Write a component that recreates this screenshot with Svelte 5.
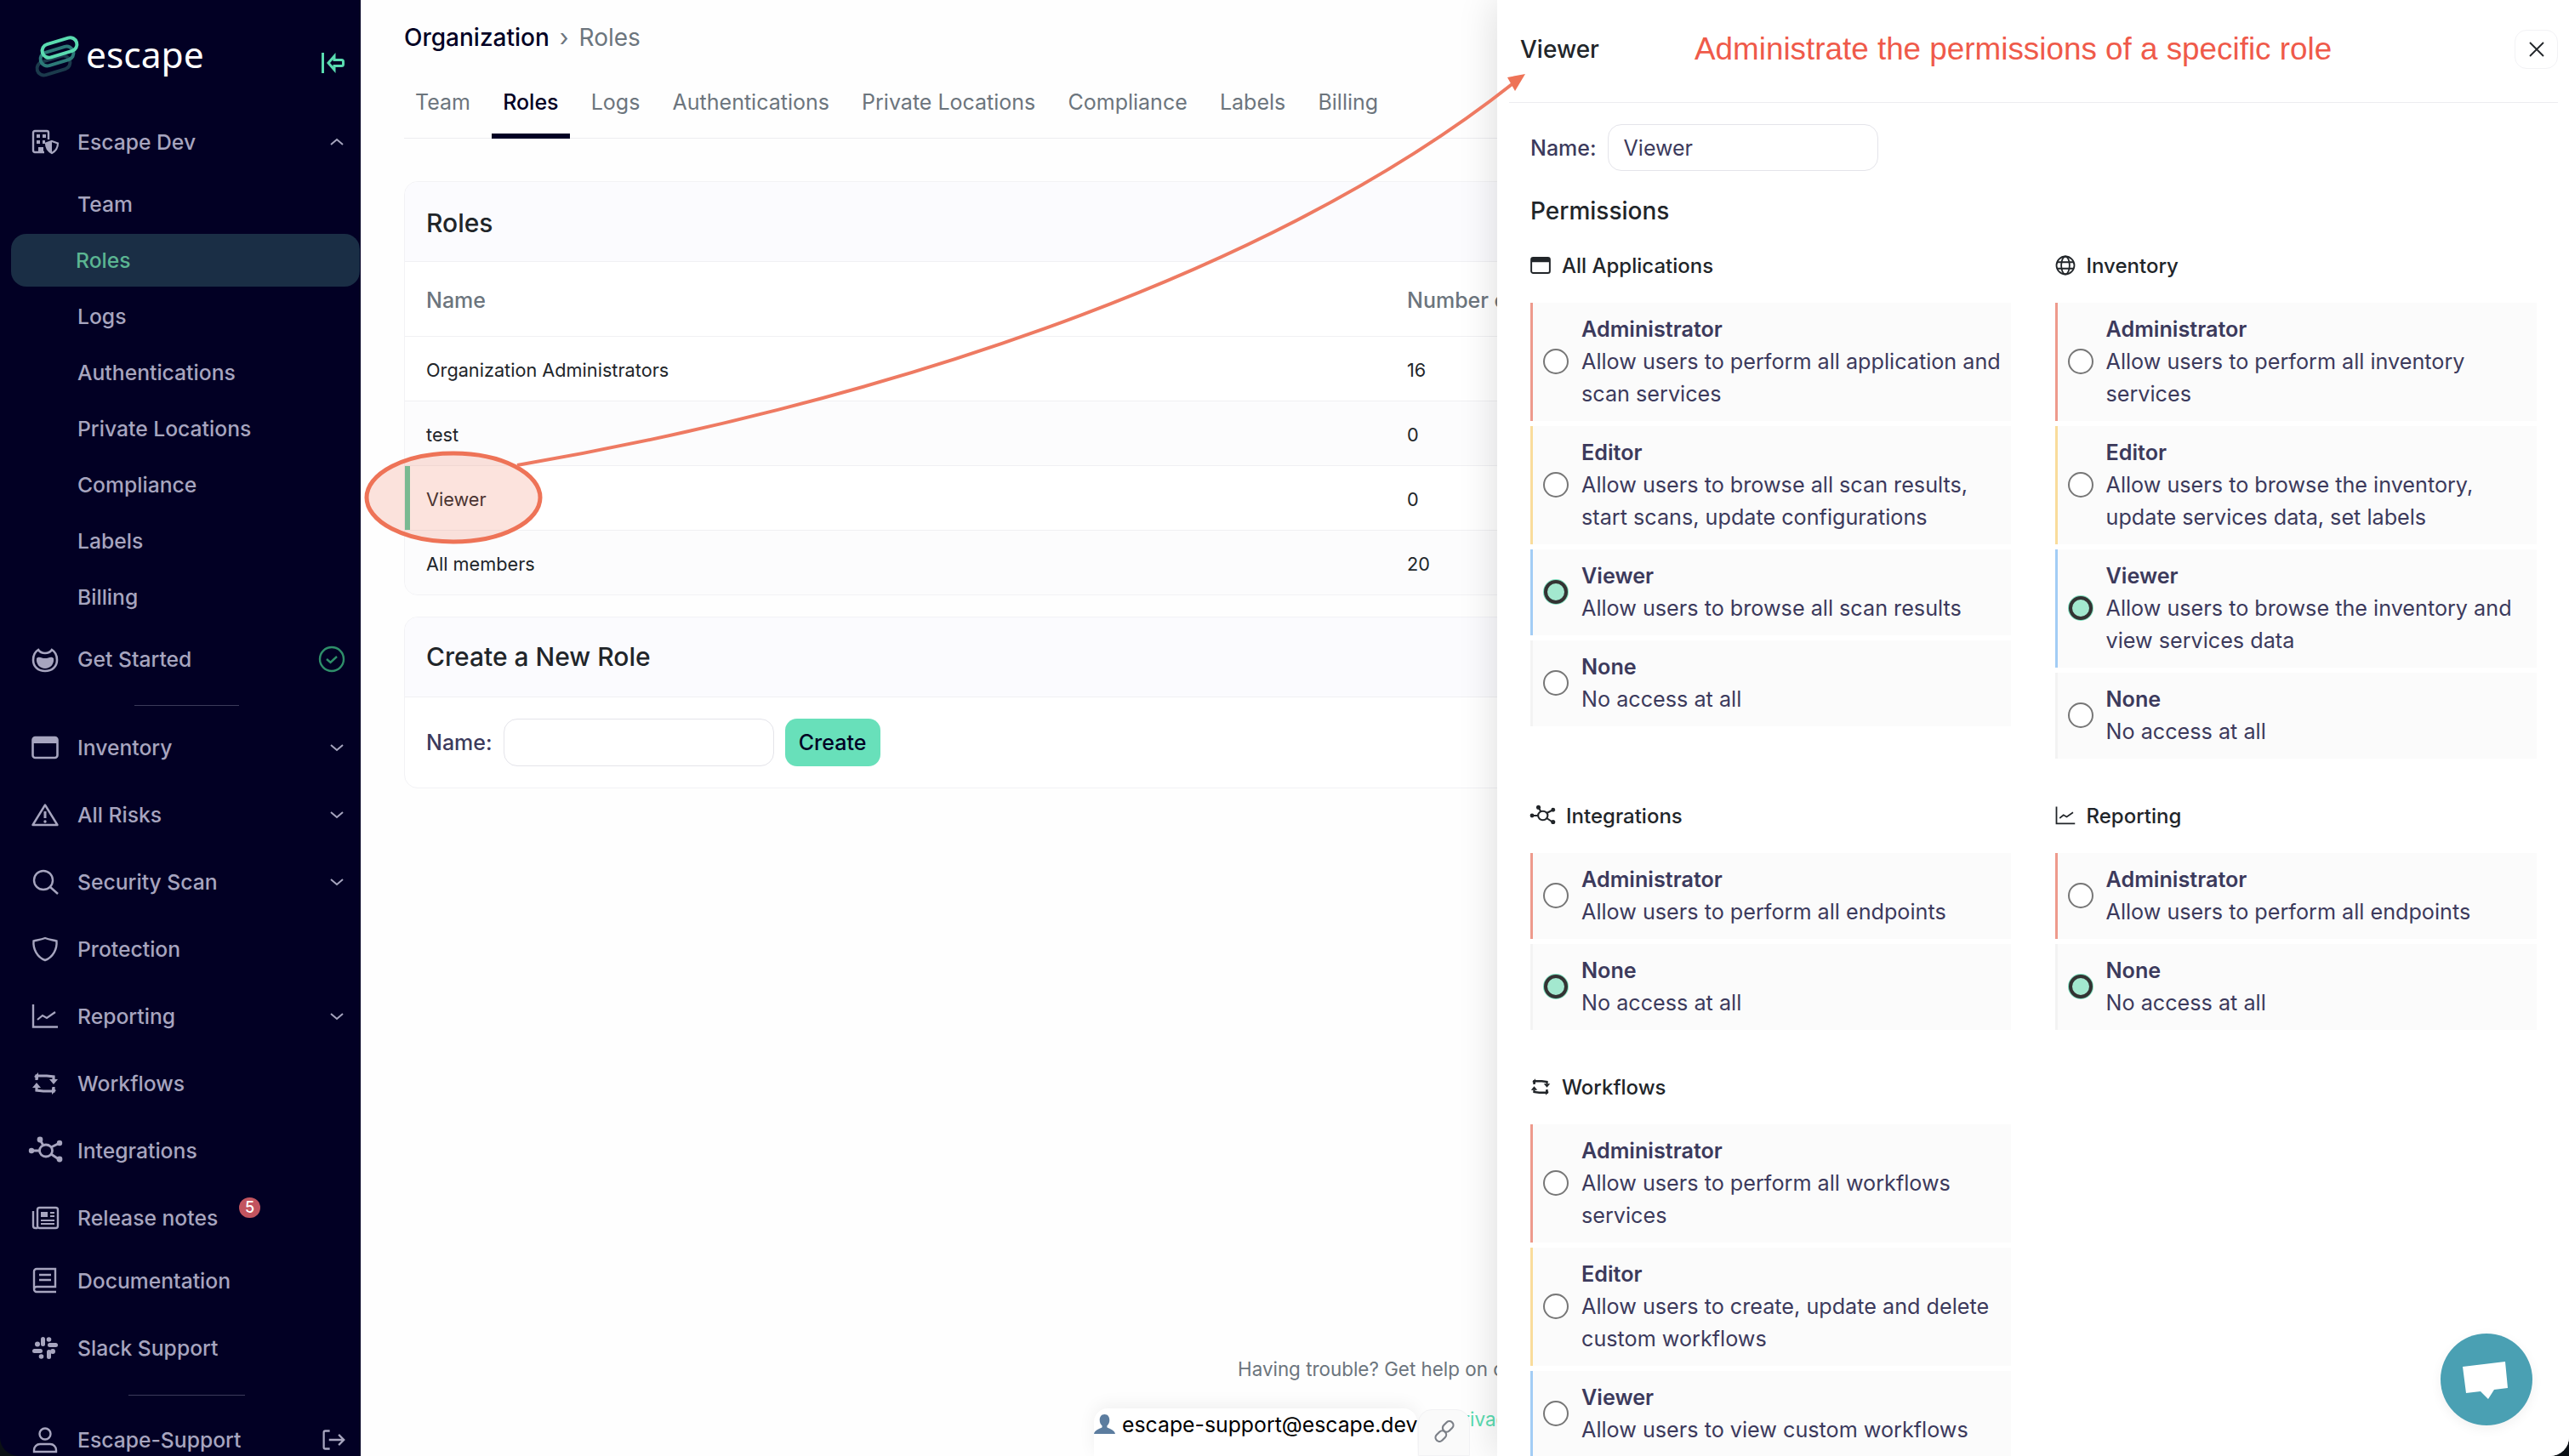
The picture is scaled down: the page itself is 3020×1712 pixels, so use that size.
<script>
  const icons = {
    org: `<path d="M15 28H4a2 2 0 0 1-2-2V5a2 2 0 0 1 2-2h14a2 2 0 0 1 2 2v8" fill="none" stroke="currentColor" stroke-width="2.4"/><path d="M6 7h4v4H6zM13 7h4v4h-4zM6 14h4v4H6zM13 14h3v4h-3zM8 22h6v6H8z" fill="currentColor"/><path d="M24 15l7 2.5c0 5-2.5 9-7 11.500-4.500-2.500-7-6.500-7-11.500z" fill="none" stroke="currentColor" stroke-width="2.200"/><path d="M24 15l-7 2.500c0 5 2.500 9 7 11.500z" fill="currentColor"/>`,
    flame: `<path d="M8 5C3 8 2 13 2 17c0 8 6 13 14 13s14-5 14-13c0-4-1-9-6-12-2 3-5 4-8 4s-6-1-8-4z" fill="none" stroke="currentColor" stroke-width="2.600"/><path d="M6 15c3-3 6 0 10 0s7-3 10 0c1 7-4 12-10 12S5 22 6 15z" fill="currentColor"/>`,
    browser: `<rect x="1.500" y="4" width="29" height="24" rx="3" fill="none" stroke="currentColor" stroke-width="2.600"/><path d="M1.500 7a3 3 0 0 1 3-3h23a3 3 0 0 1 3 3v4h-29z" fill="currentColor"/>`,
    risk: `<path d="M16 4.500L30.500 28h-29z" fill="none" stroke="currentColor" stroke-width="2.400" stroke-linejoin="round"/><path d="M16 12v8" stroke="currentColor" stroke-width="3"/><circle cx="16" cy="24" r="1.700" fill="currentColor"/>`,
    search: `<circle cx="14" cy="14" r="11" fill="none" stroke="currentColor" stroke-width="2.400"/><path d="M22 22l9 8" stroke="currentColor" stroke-width="2.400"/>`,
    shield: `<path d="M16 3c5 2 10 2.500 13.500 3.500.8 9-4 19-13.500 22.500C6.500 25.500 1.700 15.500 2.500 6.500 6 5.500 11 5 16 3z" fill="none" stroke="currentColor" stroke-width="2.400"/>`,
    chart: `<path d="M2 2v26.500h29" fill="none" stroke="currentColor" stroke-width="2.400"/><path d="M7 20l6-5 5 3 10-7" fill="none" stroke="currentColor" stroke-width="2.200"/>`,
    cycle: `<path d="M6 12V7h12l8 1v3M26 20v5H14l-8-1v-3" fill="none" stroke="currentColor" stroke-width="3.200"/><path d="M21 11h10l-5 6zM1 21h10L6 15zM3 8l5-5v8z" fill="currentColor"/><path d="M29 24l-5 5v-8z" fill="currentColor"/>`,
    network: `<ellipse cx="17" cy="16" rx="7.500" ry="7" fill="none" stroke="currentColor" stroke-width="2.800"/><path d="M0 16h9M10 3l4 7M33 7l-10 5M32 26l-9-6" stroke="currentColor" stroke-width="2.800"/><circle cx="0" cy="16" r="3.200" fill="currentColor"/><circle cx="10" cy="3" r="3.400" fill="currentColor"/><circle cx="33" cy="7" r="3.200" fill="currentColor"/><circle cx="33" cy="26" r="3.400" fill="currentColor"/>`,
    news: `<rect x="7" y="4" width="24" height="24" rx="2.500" fill="none" stroke="currentColor" stroke-width="2.400"/><path d="M7 28H4.500A2.500 2.500 0 0 1 2 25.500V8" fill="none" stroke="currentColor" stroke-width="2.400"/><path d="M11 9h8v6h-8z" fill="currentColor"/><path d="M22 10h5M22 14h5M11 19h16M11 23h16" stroke="currentColor" stroke-width="2.200"/>`,
    book: `<path d="M3 25V5a3 3 0 0 1 3-3h22v21H6a3 3 0 0 0-3 3 3 3 0 0 0 3 3h23" fill="none" stroke="currentColor" stroke-width="2.400"/><path d="M9 9h14M9 15h14" stroke="currentColor" stroke-width="2.400"/>`,
    slack: `<g fill="currentColor"><rect x="11" y="3" width="5" height="11" rx="2.500"/><rect x="18" y="18" width="5" height="11" rx="2.500"/><rect x="1" y="17" width="12" height="5" rx="2.500"/><rect x="19" y="10" width="12" height="5" rx="2.500"/><circle cx="7" cy="11.500" r="3"/><circle cx="25" cy="20" r="3"/><circle cx="20.500" cy="6" r="2.800"/><circle cx="11.500" cy="26" r="2.800"/></g>`,
    user: `<circle cx="16" cy="9" r="6.500" fill="none" stroke="currentColor" stroke-width="2.400"/><path d="M3 30v-2a7 7 0 0 1 7-7h12a7 7 0 0 1 7 7v2z" fill="none" stroke="currentColor" stroke-width="2.400"/>`,
    globe: `<g fill="none" stroke="currentColor" stroke-width="2.400"><circle cx="16" cy="16" r="14"/><ellipse cx="16" cy="16" rx="6.500" ry="14"/><path d="M3 11h26M3 21h26"/></g>`
  };

  const subItems = ['Team', 'Roles', 'Logs', 'Authentications', 'Private Locations', 'Compliance', 'Labels', 'Billing'];
  const mainItems = [
    { label: 'Inventory', icon: 'browser', chevron: true },
    { label: 'All Risks', icon: 'risk', chevron: true },
    { label: 'Security Scan', icon: 'search', chevron: true },
    { label: 'Protection', icon: 'shield' },
    { label: 'Reporting', icon: 'chart', chevron: true },
    { label: 'Workflows', icon: 'cycle' },
    { label: 'Integrations', icon: 'network' },
    { label: 'Release notes', icon: 'news', badge: 5 },
    { label: 'Documentation', icon: 'book', tight: true },
    { label: 'Slack Support', icon: 'slack' }
  ];

  const tabs = ['Team', 'Roles', 'Logs', 'Authentications', 'Private Locations', 'Compliance', 'Labels', 'Billing'];
  const roles = [
    { name: 'Organization Administrators', count: 16 },
    { name: 'test', count: 0 },
    { name: 'Viewer', count: 0, current: true },
    { name: 'All members', count: 20 }
  ];

  const none = { level: 'none', title: 'None', desc: ['No access at all'] };
  const sections = [
    {
      title: 'All Applications', icon: 'browser', selected: 'Viewer',
      options: [
        { level: 'admin', title: 'Administrator', desc: ['Allow users to perform all application and', 'scan services'] },
        { level: 'editor', title: 'Editor', desc: ['Allow users to browse all scan results,', 'start scans, update configurations'] },
        { level: 'viewer', title: 'Viewer', desc: ['Allow users to browse all scan results'] },
        none
      ]
    },
    {
      title: 'Inventory', icon: 'globe', selected: 'Viewer',
      options: [
        { level: 'admin', title: 'Administrator', desc: ['Allow users to perform all inventory', 'services'] },
        { level: 'editor', title: 'Editor', desc: ['Allow users to browse the inventory,', 'update services data, set labels'] },
        { level: 'viewer', title: 'Viewer', desc: ['Allow users to browse the inventory and', 'view services data'] },
        none
      ]
    },
    {
      title: 'Integrations', icon: 'network', selected: 'None',
      options: [
        { level: 'admin', title: 'Administrator', desc: ['Allow users to perform all endpoints'] },
        none
      ]
    },
    {
      title: 'Reporting', icon: 'chart', selected: 'None',
      options: [
        { level: 'admin', title: 'Administrator', desc: ['Allow users to perform all endpoints'] },
        none
      ]
    },
    {
      title: 'Workflows', icon: 'cycle', selected: '',
      options: [
        { level: 'admin', title: 'Administrator', desc: ['Allow users to perform all workflows', 'services'] },
        { level: 'editor', title: 'Editor', desc: ['Allow users to create, update and delete', 'custom workflows'] },
        { level: 'viewer', title: 'Viewer', desc: ['Allow users to view custom workflows'] }
      ]
    }
  ];
</script>

{#snippet icon(name)}
  <svg class="icon" viewBox="0 0 32 32">{@html icons[name]}</svg>
{/snippet}

{#snippet chevron(up)}
  <svg class="chevron" viewBox="0 0 16 10"><path d={up ? 'M1 8l7-6 7 6' : 'M1 2l7 6 7-6'} /></svg>
{/snippet}

<div class="app">
  <aside class="sidebar">
    <div class="brand">
      <svg class="logo" viewBox="0 0 54 52">
        <rect class="pill third" x="3" y="28" width="40" height="16" rx="8" transform="rotate(-17 23 36)" />
        <rect class="pill second" x="7" y="17" width="40" height="16" rx="8" transform="rotate(-17 27 25)" />
        <rect class="pill first" x="9" y="7" width="42" height="16" rx="8" transform="rotate(-17 30 15)" />
      </svg>
      <span class="wordmark">escape</span>
      <svg class="collapse" viewBox="0 0 28 24">
        <path d="M1.500 0v24" />
        <path d="M8 12l7-8v4.500h8.500a2 2 0 0 1 2 2v3a2 2 0 0 1-2 2H15V20z" />
      </svg>
    </div>

    <div class="row">
      {@render icon('org')}
      <span>Escape Dev</span>
      {@render chevron(true)}
    </div>
    <div class="subs">
      {#each subItems as item}
        <div class="sub" class:active={item === 'Roles'}>{item}</div>
      {/each}
    </div>
    <div class="row started">
      {@render icon('flame')}
      <span>Get Started</span>
      <svg class="check" viewBox="0 0 32 32"><circle cx="16" cy="16" r="14" /><path d="M10 16l4.500 4 7.500-7" /></svg>
    </div>

    <div class="divider first-divider"></div>

    <nav class="mains">
      {#each mainItems as item}
        <div class="row" class:tight={item.tight}>
          {@render icon(item.icon)}
          <span>{item.label}</span>
          {#if item.badge}<b class="badge">{item.badge}</b>{/if}
          {#if item.chevron}{@render chevron(false)}{/if}
        </div>
      {/each}
    </nav>

    <div class="divider second-divider"></div>

    <div class="row account">
      {@render icon('user')}
      <span>Escape-Support</span>
      <svg class="logout" viewBox="0 0 32 32"><path d="M11 4H5a2 2 0 0 0-2 2v20a2 2 0 0 0 2 2h6M10 16h20M23 9l7 7-7 7" /></svg>
    </div>
  </aside>

  <main class="main">
    <div class="crumbs"><span class="org">Organization</span><i>›</i><span>Roles</span></div>
    <div class="tabs">
      {#each tabs as tab}
        <div class="tab" class:on={tab === 'Roles'}>{tab}</div>
      {/each}
    </div>

    <section class="card roles-card">
      <h2>Roles</h2>
      <div class="grid head"><span>Name</span><span>Number of members</span></div>
      {#each roles as role, i}
        <div class="grid line" class:odd={i % 2 === 1} class:current={role.current}>
          <span>{role.name}</span><span>{role.count}</span>
        </div>
      {/each}
    </section>

    <section class="card create-card">
      <h2>Create a New Role</h2>
      <div class="create-form">
        <span class="field-label">Name:</span>
        <div class="input"></div>
        <button class="create">Create</button>
      </div>
    </section>

    <footer class="foot">
      <p>Having trouble? Get help on our Discord or contact support</p>
      <p class="links">Privacy Policy</p>
    </footer>
  </main>

  <aside class="panel">
    <header class="panel-head">
      <span class="panel-title">Viewer</span>
      <span class="note">Administrate the permissions of a specific role</span>
      <button class="close" aria-label="Close">
        <svg viewBox="0 0 18 18"><path d="M1 1l16 16M17 1L1 17" /></svg>
      </button>
    </header>

    <div class="name-row">
      <span class="field-label">Name:</span>
      <div class="input filled">Viewer</div>
    </div>

    <h3 class="perm-title">Permissions</h3>

    <div class="perm-grid">
      {#each sections as section}
        <div class="perm">
          <div class="perm-head" class:wide={section.icon === 'network'}>
            {@render icon(section.icon)}
            <span>{section.title}</span>
          </div>
          <div class="options">
            {#each section.options as opt}
              <div class="option {opt.level}">
                <span class="radio" class:sel={section.selected === opt.title}></span>
                <div class="copy">
                  <strong>{opt.title}</strong>
                  {#each opt.desc as line}<div>{line}</div>{/each}
                </div>
              </div>
            {/each}
          </div>
        </div>
      {/each}
    </div>
  </aside>

  <svg class="annotation" viewBox="0 0 3020 1712">
    <ellipse cx="533" cy="585" rx="102" ry="52" />
    <path class="curve" d="M608 547C1000 480 1480 335 1780 97" />
    <path class="head" d="M1793 87L1772 91L1781 107z" />
  </svg>

  <div class="chip">
    <svg class="bust" viewBox="0 0 26 26">
      <path d="M13 1c4 0 6 3 6 7 0 3-1 5-3 7v2c3 2 9 3 10 8H0c1-5 7-6 10-8v-2c-2-2-3-4-3-7 0-4 2-7 6-7z" />
    </svg>
    <span>escape-support@escape.dev</span>
  </div>
  <div class="chip-link">
    <svg viewBox="0 0 28 28">
      <rect x="11" y="1.500" width="15" height="10" rx="5" transform="rotate(-45 18.500 6.500) translate(-1 1)" />
      <rect x="2" y="16.500" width="15" height="10" rx="5" transform="rotate(-45 9.500 21.500) translate(1 -1)" />
    </svg>
  </div>

  <div class="chat">
    <svg viewBox="0 0 108 108"><path d="M26 39l50-6 3 31-16 2-7 11-9-9-17 2z" /></svg>
  </div>
</div>

<style>
  :global(body) {
    background: #0b1015;
    margin: 0;
  }

  .app {
    border-radius: 0 0 22px 22px;
    color: #212529;
    display: flex;
    font-family: Inter, "Noto Sans", sans-serif;
    height: 1712px;
    overflow: hidden;
    position: relative;
    width: 3020px;
  }

  /* sidebar */
  .sidebar {
    background: #020024;
    color: #a7a5bf;
    display: flex;
    flex: 0 0 424px;
    flex-direction: column;
    font-size: 24.700px;
    font-weight: 500;
    overflow: hidden;
  }

  .brand {
    align-items: center;
    display: flex;
    flex: 0 0 134px;
    padding: 0 18px 0 40px;
  }

  .logo {
    height: 52px;
    width: 54px;
  }

  .pill {
    fill: none;
    stroke-width: 4;
  }

  .first { stroke: #5adbb0; }
  .second { stroke: #2c7a78; }
  .third { stroke: #1b3a4c; }

  .wordmark {
    color: #fff;
    font-family: "Noto Sans", sans-serif;
    font-size: 42.500px;
    font-weight: 400;
    line-height: 1;
    margin: -6px 0 0 7px;
  }

  .collapse {
    fill: none;
    height: 24px;
    margin: 14px 0 0 auto;
    stroke: #5adbb0;
    stroke-width: 3;
    width: 28px;
  }

  .row {
    align-items: center;
    display: flex;
    flex: 0 0 66px;
    height: 66px;
    padding-left: 37px;
  }

  .row > span {
    margin-left: 22px;
  }

  .icon {
    flex: none;
    height: 32px;
    overflow: visible;
    width: 32px;
  }

  .chevron {
    fill: none;
    height: 10px;
    margin-left: auto;
    margin-right: 20px;
    stroke: currentColor;
    stroke-width: 2;
    width: 16px;
  }

  .subs {
    margin-top: 7px;
  }

  .sub {
    height: 66px;
    line-height: 66px;
    padding-left: 91px;
  }

  .sub.active {
    background: #1a2e45;
    border-radius: 18px;
    color: #5bb592;
    height: 62px;
    line-height: 62px;
    margin: 2px 1px 2px 13px;
    padding-left: 76px;
  }

  .started {
    margin-top: 7px;
  }

  .check {
    fill: none;
    height: 32px;
    margin-left: auto;
    margin-right: 18px;
    stroke: #2f8f6a;
    stroke-width: 2.400;
    width: 32px;
  }

  .divider {
    background: #3b3a5a;
    flex: none;
    height: 1px;
  }

  .first-divider {
    margin: 21px 143px 16px 158px;
  }

  .second-divider {
    margin: 22px 136px 19px 151px;
  }

  .mains .row {
    margin-bottom: 13px;
    position: relative;
  }

  .mains .row:last-child {
    margin-bottom: 0;
  }

  .mains .row:has(+ .tight) {
    margin-bottom: 8px;
  }

  .badge {
    background: #c2545f;
    border-radius: 12px;
    color: #fff;
    font-size: 18px;
    font-weight: 500;
    height: 24px;
    left: 281px;
    line-height: 24px;
    position: absolute;
    text-align: center;
    top: 9px;
    width: 25px;
  }

  .logout {
    fill: none;
    height: 28px;
    margin-left: auto;
    margin-right: 18px;
    stroke: currentColor;
    stroke-width: 2.600;
    width: 28px;
  }

  /* main column */
  .main {
    background: #fefefe;
    display: flex;
    flex: 1;
    flex-direction: column;
    min-width: 0;
    padding: 24px 40px 0 51px;
  }

  .crumbs {
    align-items: center;
    color: #6c757d;
    display: flex;
    font-size: 28px;
    height: 40px;
  }

  .crumbs .org {
    color: #020024;
    font-weight: 500;
  }

  .crumbs i {
    font-style: normal;
    margin: 0 12px;
  }

  .tabs {
    border-bottom: 1px solid #ececf0;
    display: flex;
    gap: 12.200px;
    margin-top: 18px;
  }

  .tab {
    border-bottom: 6px solid transparent;
    box-sizing: border-box;
    color: #6c757d;
    font-size: 25px;
    height: 81px;
    line-height: 76px;
    margin-bottom: -1px;
    padding: 0 13px;
  }

  .tab.on {
    border-color: #020024;
    color: #020024;
    font-weight: 500;
  }

  .card {
    background: #fff;
    border: 1px solid #f2f2f5;
    border-radius: 16px;
    overflow: hidden;
  }

  .card h2 {
    background: #fbfbfe;
    border-bottom: 1px solid #f0f0f3;
    font-size: 30px;
    font-weight: 500;
    line-height: 93px;
    margin: 0;
    padding-left: 25px;
  }

  .roles-card {
    margin-top: 50px;
  }

  .roles-card h2 {
    line-height: 90px;
    padding-top: 3px;
  }

  .grid {
    border-bottom: 1px solid #f0f0f3;
    display: grid;
    font-size: 21.700px;
    grid-template-columns: 1153px 1fr;
    height: 75px;
    line-height: 78px;
    padding-left: 25px;
  }

  .grid:last-child {
    border-bottom: 0;
  }

  .head {
    color: #6c757d;
    font-size: 25px;
    font-weight: 500;
    height: 87px;
    line-height: 90px;
  }

  .line.odd {
    background: #fcfcfd;
  }

  .line.current {
    box-shadow: inset 6px 0 0 #5ccba1;
  }

  .create-card {
    margin-top: 25px;
  }

  .create-form {
    align-items: center;
    display: flex;
    padding: 25px;
  }

  .field-label {
    color: #3c3a5c;
    font-size: 25px;
    font-weight: 500;
  }

  .input {
    background: #fff;
    border: 1px solid #e4e4ea;
    border-radius: 16px;
    box-sizing: border-box;
    color: #3c3a5c;
    font-size: 25px;
    height: 56px;
    line-height: 54px;
    margin-left: 13px;
    padding-left: 18px;
    width: 318px;
  }

  .input.filled {
    height: 55px;
  }

  .create {
    background: #68e0ba;
    border: 0;
    border-radius: 14px;
    color: #020024;
    font-family: inherit;
    font-size: 25px;
    font-weight: 500;
    height: 56px;
    margin-left: 13px;
    padding: 0;
    width: 112px;
  }

  .foot {
    color: #6c757d;
    font-size: 22.400px;
    margin-top: auto;
    padding: 0 0 28px 980px;
  }

  .foot p {
    line-height: 30px;
    margin: 0;
    white-space: nowrap;
  }

  .foot .links {
    color: #5adbb0;
    margin-top: 29px;
    padding-left: 250px;
  }

  /* drawer */
  .panel {
    background: #fff;
    bottom: 0;
    box-shadow: 0 0 44px rgba(0, 0, 0, 0.14);
    position: absolute;
    right: 0;
    top: 0;
    width: 1260px;
  }

  .panel-head {
    align-items: center;
    border-bottom: 1px solid #ececf0;
    box-sizing: border-box;
    display: flex;
    height: 121px;
    margin: 0 13px 0 14px;
    padding: 0 0 4px 13px;
  }

  .panel-title {
    font-size: 28px;
    font-weight: 500;
    width: 205px;
  }

  .note {
    color: #ef5a4a;
    font-family: "Liberation Sans", Arial, sans-serif;
    font-size: 36.850px;
    margin-top: -1px;
  }

  .close {
    background: #fff;
    border: 1px solid #f2f2f5;
    border-radius: 14px;
    height: 46px;
    margin-left: auto;
    padding: 0;
    width: 51px;
  }

  .close svg {
    display: block;
    fill: none;
    height: 18px;
    margin: auto;
    stroke: #212529;
    stroke-width: 1.800;
    width: 18px;
  }

  .name-row {
    align-items: center;
    display: flex;
    margin-top: 25px;
    padding-left: 39px;
  }

  .perm-title {
    font-size: 28px;
    font-weight: 500;
    line-height: 40px;
    margin: 27px 0 24px 39px;
  }

  .perm-grid {
    align-items: start;
    display: grid;
    gap: 47px 51.500px;
    grid-template-columns: 565px 566px;
    padding-left: 39px;
  }

  .perm-head {
    align-items: center;
    display: flex;
    font-size: 24px;
    font-weight: 500;
    gap: 13px;
    height: 40px;
    margin-bottom: 24px;
  }

  .perm-head .icon {
    height: 24px;
    width: 24px;
  }

  .perm-head.wide {
    gap: 16px;
    padding-left: 2px;
  }

  .options {
    display: flex;
    flex-direction: column;
    gap: 6px;
  }

  .option {
    align-items: center;
    background: #fbfbfb;
    border-left: 3px solid #f3f3f3;
    color: #3c3a5c;
    display: flex;
    font-size: 25.200px;
    line-height: 38px;
    padding: 12px 0 13px 12px;
  }

  .option.admin { border-left-color: #ee9a8c; }
  .option.editor { border-left-color: #f9dc9b; }
  .option.viewer { border-left-color: #a3cdf5; }

  .radio {
    background: #fff;
    border: 2px solid #777;
    border-radius: 50%;
    box-sizing: border-box;
    flex: none;
    height: 30px;
    margin-right: 15px;
    width: 30px;
  }

  .radio.sel {
    background: #a3e8cf;
    border: 4px solid #333;
    box-shadow: 0 0 0 1px #7fe0bf;
    height: 28px;
    margin: 0 16px 0 1px;
    width: 28px;
  }

  .copy strong {
    display: block;
    font-weight: 600;
  }

  /* annotations and floating bits */
  .annotation {
    height: 1712px;
    left: 0;
    pointer-events: none;
    position: absolute;
    top: 0;
    width: 3020px;
  }

  .annotation ellipse {
    fill: rgba(238, 115, 87, 0.2);
    stroke: #ee7357;
    stroke-width: 5;
  }

  .curve {
    fill: none;
    stroke: #ee7a62;
    stroke-width: 4;
  }

  .head {
    fill: #ee7357;
  }

  .chip {
    align-items: flex-start;
    background: #fff;
    border-radius: 16px 16px 0 0;
    bottom: 0;
    box-shadow: 0 -4px 20px rgba(0, 0, 0, 0.06);
    box-sizing: border-box;
    color: #000;
    display: flex;
    font-size: 24.800px;
    gap: 8px;
    height: 56px;
    left: 1286px;
    line-height: 38px;
    position: absolute;
    white-space: nowrap;
    width: 380px;
  }

  .bust {
    fill: #5c7d9f;
    flex: none;
    height: 25px;
    margin-top: 6px;
    width: 25px;
  }

  .chip-link {
    background: #fafafa;
    border: 1px solid #f2f2f4;
    border-radius: 16px 16px 0 0;
    bottom: 0;
    box-sizing: border-box;
    height: 55px;
    left: 1667px;
    position: absolute;
    width: 61px;
  }

  .chip-link svg {
    fill: none;
    height: 26px;
    left: 17px;
    position: absolute;
    stroke: #7c8088;
    stroke-width: 2.400;
    top: 12px;
    width: 26px;
  }

  .chat {
    background: #4aa0b3;
    border-radius: 50%;
    bottom: 36px;
    box-shadow: 0 4px 14px rgba(0, 0, 0, 0.06);
    height: 108px;
    position: absolute;
    right: 43px;
    width: 108px;
  }

  .chat svg {
    display: block;
    fill: #fff;
    height: 108px;
    width: 108px;
  }
</style>
